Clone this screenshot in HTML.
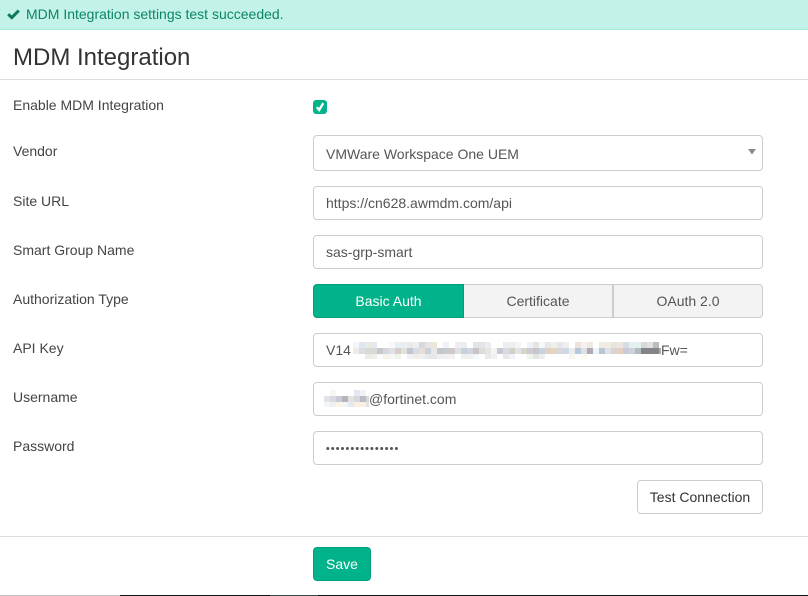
<!DOCTYPE html>
<html><head><meta charset="utf-8"><title>MDM Integration</title>
<style>
*{box-sizing:border-box}
html,body{margin:0;padding:0;background:#fff}
body{position:relative;width:808px;height:596px;overflow:hidden;font-family:"Liberation Sans",sans-serif;font-size:14px;color:#333}
.a{position:absolute;white-space:nowrap}
.alert{left:0;top:0;width:808px;height:30px;background:#c3f3e8;border-bottom:1px solid #a3e9d8}
.alert span{position:absolute;left:26px;top:6px;line-height:16px;color:#0c8568}
h1{position:absolute;left:13px;top:44px;margin:0;font-size:24px;font-weight:400;line-height:28px;color:#333}
.hr{position:absolute;left:0;width:808px;height:1px;background:#ddd}
.l{left:13px;line-height:20px;color:#444}
.in{left:313px;width:450px;border:1px solid #ccc;border-radius:4px;background:#fff;color:#555;padding-left:12px}
.seg{top:284px;height:34px;line-height:32px;text-align:center;border:1px solid #ccc;background:#f3f3f3;color:#555}
.btn{border-radius:4px;text-align:center;height:34px;line-height:32px}
svg{position:absolute;display:block}
</style></head><body>
<div class="a alert"><span>MDM Integration settings test succeeded.</span></div>
<svg style="left:7px;top:9px" width="13" height="11" viewBox="0 0 13 11"><path d="M1.2 5.2 L4.8 8.6 L11.8 1.6" fill="none" stroke="#0c7a60" stroke-width="3"/></svg>
<h1>MDM Integration</h1>
<div class="hr" style="top:79px"></div>

<div class="a l" style="top:95px">Enable MDM Integration</div>
<div class="a l" style="top:141px">Vendor</div>
<div class="a l" style="top:191px">Site URL</div>
<div class="a l" style="top:240px">Smart Group Name</div>
<div class="a l" style="top:289px">Authorization Type</div>
<div class="a l" style="top:338px">API Key</div>
<div class="a l" style="top:387px">Username</div>
<div class="a l" style="top:436px">Password</div>

<div class="a" style="left:313px;top:100px;width:14px;height:14px;border-radius:3px;background:#00b38a"></div>
<svg style="left:313px;top:100px" width="14" height="14" viewBox="0 0 14 14"><path d="M3.8 7.2 L6.2 10 L10.2 3.2" fill="none" stroke="#fff" stroke-width="2.4"/></svg>

<div class="a in" style="top:135px;height:36px;line-height:37px">VMWare Workspace One UEM</div>
<svg style="left:748px;top:149px" width="8" height="6" viewBox="0 0 8 6"><path d="M0 0H8L4 5.5Z" fill="#888"/></svg>
<div class="a in" style="top:186px;height:34px;line-height:32px">https://cn628.awmdm.com/api</div>
<div class="a in" style="top:235px;height:34px;line-height:32px">sas-grp-smart</div>

<div class="a seg" style="left:313px;width:151px;background:#00b38a;border-color:#00a07c;color:#fff;border-radius:4px 0 0 4px">Basic Auth</div>
<div class="a seg" style="left:464px;width:149px;border-left:0">Certificate</div>
<div class="a seg" style="left:613px;width:150px;border-left:1px solid #ccc;border-radius:0 4px 4px 0">OAuth 2.0</div>

<div class="a in" style="top:333px;height:34px;line-height:33px">V14</div>
<svg style="left:353px;top:342px" width="310" height="18" viewBox="0 0 310 18" shape-rendering="crispEdges">
<g><rect x="0" width="6" height="6" fill="#f4f5f8"/><rect x="6" width="6" height="6" fill="#dfe6f0"/><rect x="12" width="6" height="6" fill="#e9ebe2"/><rect x="18" width="6" height="6" fill="#e0e8f0"/><rect x="36" width="6" height="6" fill="#f8f8f8"/><rect x="42" width="6" height="6" fill="#e6eef6"/><rect x="48" width="6" height="6" fill="#eaeef2"/><rect x="54" width="6" height="6" fill="#eaeaea"/><rect x="60" width="6" height="6" fill="#e9f0f2"/><rect x="66" width="6" height="6" fill="#d9d6dc"/><rect x="72" width="6" height="6" fill="#e8e4e0"/><rect x="78" width="6" height="6" fill="#eee4d8"/><rect x="90" width="6" height="6" fill="#f2f2f2"/><rect x="102" width="12" height="6" fill="#ecedf0"/><rect x="120" width="12" height="6" fill="#e4e4e6"/><rect x="132" width="6" height="6" fill="#eaeef2"/><rect x="150" width="12" height="6" fill="#eceef2"/><rect x="162" width="6" height="6" fill="#f4f4f4"/><rect x="174" width="6" height="6" fill="#eef2f8"/><rect x="180" width="6" height="6" fill="#e4e4e6"/><rect x="186" width="6" height="6" fill="#f6f8f8"/><rect x="192" width="6" height="6" fill="#e8e8ea"/><rect x="198" width="6" height="6" fill="#f2eee8"/><rect x="204" width="6" height="6" fill="#e4e8ee"/><rect x="210" width="6" height="6" fill="#eceef0"/><rect x="222" width="6" height="6" fill="#f0e2d8"/><rect x="228" width="6" height="6" fill="#f4f2f0"/><rect x="234" width="6" height="6" fill="#f0e8e2"/><rect x="246" width="12" height="6" fill="#f0ece0"/><rect x="258" width="6" height="6" fill="#e8e4de"/><rect x="264" width="6" height="6" fill="#ece6e0"/><rect x="270" width="6" height="6" fill="#d8dce6"/><rect x="276" width="12" height="6" fill="#e4f0ee"/><rect x="288" width="6" height="6" fill="#d8d8da"/><rect x="294" width="6" height="6" fill="#e4e0e0"/><rect x="300" width="6" height="6" fill="#bcbcbc"/></g>
<g><rect x="0" y="6" width="6" height="6" fill="#efebe6"/><rect x="6" y="6" width="6" height="6" fill="#dcdde0"/><rect x="12" y="6" width="12" height="6" fill="#d8dad8"/><rect x="24" y="6" width="6" height="6" fill="#c4c8ca"/><rect x="30" y="6" width="6" height="6" fill="#d6d6de"/><rect x="36" y="6" width="6" height="6" fill="#e0e2e4"/><rect x="42" y="6" width="6" height="6" fill="#d8cccc"/><rect x="48" y="6" width="6" height="6" fill="#dfe2d8"/><rect x="54" y="6" width="6" height="6" fill="#c4c4d2"/><rect x="60" y="6" width="6" height="6" fill="#d8dce2"/><rect x="66" y="6" width="6" height="6" fill="#e8dfd6"/><rect x="72" y="6" width="6" height="6" fill="#c8d2dc"/><rect x="78" y="6" width="6" height="6" fill="#e8e8e8"/><rect x="84" y="6" width="6" height="6" fill="#c0c6ca"/><rect x="90" y="6" width="6" height="6" fill="#c4ccd0"/><rect x="96" y="6" width="6" height="6" fill="#d4c8c4"/><rect x="102" y="6" width="6" height="6" fill="#dde2e6"/><rect x="108" y="6" width="6" height="6" fill="#c8d0da"/><rect x="114" y="6" width="6" height="6" fill="#d0d4dc"/><rect x="120" y="6" width="6" height="6" fill="#c8c4c8"/><rect x="126" y="6" width="6" height="6" fill="#dcdcdc"/><rect x="132" y="6" width="6" height="6" fill="#e4e6e0"/><rect x="138" y="6" width="6" height="6" fill="#f4f4f4"/><rect x="144" y="6" width="6" height="6" fill="#c8c8d4"/><rect x="150" y="6" width="6" height="6" fill="#d4dde0"/><rect x="156" y="6" width="6" height="6" fill="#d8d0c8"/><rect x="162" y="6" width="6" height="6" fill="#e0e4e4"/><rect x="168" y="6" width="6" height="6" fill="#d4d6cc"/><rect x="174" y="6" width="6" height="6" fill="#ccccd0"/><rect x="180" y="6" width="6" height="6" fill="#c8c4c8"/><rect x="186" y="6" width="6" height="6" fill="#c4d4e4"/><rect x="192" y="6" width="6" height="6" fill="#e4d0c0"/><rect x="198" y="6" width="6" height="6" fill="#e4d4c4"/><rect x="204" y="6" width="6" height="6" fill="#d8d8dc"/><rect x="210" y="6" width="6" height="6" fill="#ccd8e4"/><rect x="216" y="6" width="6" height="6" fill="#ececf0"/><rect x="222" y="6" width="6" height="6" fill="#b8c8dc"/><rect x="228" y="6" width="6" height="6" fill="#dde0e4"/><rect x="234" y="6" width="6" height="6" fill="#b0a8b4"/><rect x="240" y="6" width="6" height="6" fill="#ecf4f8"/><rect x="246" y="6" width="6" height="6" fill="#b8c4d8"/><rect x="252" y="6" width="6" height="6" fill="#e0e0e6"/><rect x="258" y="6" width="6" height="6" fill="#d8d4d0"/><rect x="264" y="6" width="6" height="6" fill="#e4d0c0"/><rect x="270" y="6" width="6" height="6" fill="#c8ccd8"/><rect x="276" y="6" width="6" height="6" fill="#d0d0da"/><rect x="282" y="6" width="6" height="6" fill="#b0bcc0"/><rect x="288" y="6" width="18" height="6" fill="#828488"/><rect x="306" y="6" width="2" height="6" fill="#aaa"/></g>
<g><rect x="12" y="12" width="6" height="5" fill="#ecebe6"/><rect x="18" y="12" width="6" height="5" fill="#f0eee8"/><rect x="24" y="12" width="6" height="5" fill="#fbfbfb"/><rect x="30" y="12" width="6" height="5" fill="#f8f4ea"/><rect x="36" y="12" width="6" height="5" fill="#f4f6f8"/><rect x="42" y="12" width="6" height="5" fill="#f0f4e8"/><rect x="54" y="12" width="6" height="5" fill="#eef2f4"/><rect x="60" y="12" width="6" height="5" fill="#f0eee8"/><rect x="66" y="12" width="6" height="5" fill="#f0f0f0"/><rect x="72" y="12" width="12" height="5" fill="#e7e7e7"/><rect x="84" y="12" width="6" height="5" fill="#eceef2"/><rect x="90" y="12" width="6" height="5" fill="#f0eef0"/><rect x="96" y="12" width="6" height="5" fill="#f4f2f0"/><rect x="108" y="12" width="12" height="5" fill="#eef2ee"/><rect x="120" y="12" width="6" height="5" fill="#f4f8fa"/><rect x="132" y="12" width="6" height="5" fill="#e8eaec"/><rect x="138" y="12" width="6" height="5" fill="#f0f0f0"/><rect x="150" y="12" width="6" height="5" fill="#e8e8e8"/><rect x="156" y="12" width="6" height="5" fill="#eef4fa"/><rect x="174" y="12" width="6" height="5" fill="#eef4e8"/><rect x="180" y="12" width="6" height="5" fill="#e4e4e0"/><rect x="186" y="12" width="6" height="5" fill="#eeeeee"/><rect x="216" y="12" width="6" height="5" fill="#f8f4ee"/><rect x="228" y="12" width="6" height="5" fill="#fbfbee"/></g>
</svg>
<div class="a" style="left:661px;top:334px;line-height:33px;color:#555">Fw=</div>

<div class="a in" style="top:382px;height:34px;line-height:32px"><span style="position:absolute;left:55px;top:0">@fortinet.com</span></div>
<svg style="left:324px;top:390px" width="46" height="18" viewBox="0 0 46 18" shape-rendering="crispEdges">
<rect x="6" y="0" width="6" height="6" fill="#f8f6f0"/><rect x="30" y="0" width="6" height="6" fill="#e4e8f0"/><rect x="36" y="0" width="6" height="6" fill="#f0f2f6"/>
<rect x="0" y="6" width="6" height="6" fill="#e0e4ea"/><rect x="6" y="6" width="6" height="6" fill="#d8dae0"/><rect x="12" y="6" width="6" height="6" fill="#c8ccd4"/><rect x="18" y="6" width="6" height="6" fill="#b4b4bc"/><rect x="24" y="6" width="6" height="6" fill="#e4e4dc"/><rect x="30" y="6" width="6" height="6" fill="#d4d8de"/><rect x="36" y="6" width="6" height="6" fill="#b8bcc4"/><rect x="42" y="6" width="3" height="6" fill="#d8d8dc"/>
<rect x="0" y="12" width="6" height="5" fill="#f4f6f8"/><rect x="6" y="12" width="6" height="5" fill="#eef0f4"/><rect x="12" y="12" width="6" height="5" fill="#fcf2e6"/><rect x="18" y="12" width="6" height="5" fill="#f4f4f4"/><rect x="24" y="12" width="6" height="5" fill="#e4e8f0"/><rect x="30" y="12" width="6" height="5" fill="#f8f0e4"/><rect x="36" y="12" width="6" height="5" fill="#fbf0e0"/><rect x="42" y="12" width="3" height="5" fill="#e0e0e4"/>
</svg>

<div class="a in" style="top:431px;height:34px"></div>
<svg style="left:326px;top:446px" width="75" height="5" viewBox="0 0 75 5" fill="#555">
<circle cx="1.8" cy="2.5" r="1.5"/><circle cx="6.7" cy="2.5" r="1.5"/><circle cx="11.6" cy="2.5" r="1.5"/><circle cx="16.5" cy="2.5" r="1.5"/><circle cx="21.4" cy="2.5" r="1.5"/><circle cx="26.3" cy="2.5" r="1.5"/><circle cx="31.2" cy="2.5" r="1.5"/><circle cx="36.1" cy="2.5" r="1.5"/><circle cx="41" cy="2.5" r="1.5"/><circle cx="45.9" cy="2.5" r="1.5"/><circle cx="50.8" cy="2.5" r="1.5"/><circle cx="55.7" cy="2.5" r="1.5"/><circle cx="60.6" cy="2.5" r="1.5"/><circle cx="65.5" cy="2.5" r="1.5"/><circle cx="70.4" cy="2.5" r="1.5"/>
</svg>

<div class="a btn" style="left:637px;top:480px;width:126px;border:1px solid #ccc;background:#fff;color:#333">Test Connection</div>
<div class="hr" style="top:536px"></div>
<div class="a btn" style="left:313px;top:547px;width:58px;border:1px solid #00a07c;background:#00b38a;color:#fff">Save</div>

<div class="a" style="left:0;top:595px;width:120px;height:1px;background:#c0c0c0"></div>
<div class="a" style="left:120px;top:595px;width:688px;height:1px;background:#0a1414"></div>
<div class="a" style="left:270px;top:595px;width:48px;height:1px;background:#3a4a4a"></div>
</body></html>
